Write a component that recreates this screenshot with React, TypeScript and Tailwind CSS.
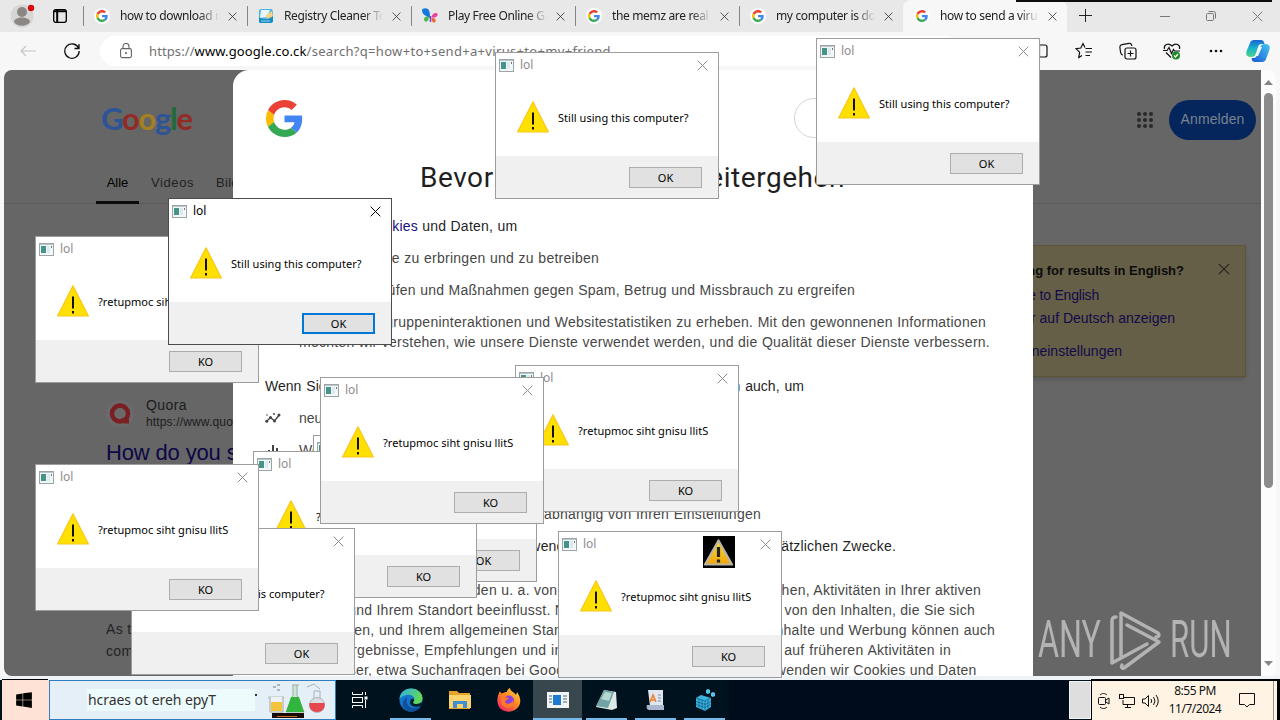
// desktop with a browser window, taskbar and a pile of message boxes

import type { ReactNode } from 'react';
import { IoLogoWindows } from 'react-icons/io5';

const Cross = ({ size = 11, className = '' }: { size?: number; className?: string }) => (
  <svg width={size} height={size} viewBox="0 0 11 11" className={className}>
    <path d="M.7.7l9.6 9.6M10.3.7L.7 10.3" stroke="currentColor" fill="none" />
  </svg>
);

const GoogleG = ({ size }: { size: number }) => (
  <svg width={size} height={size} viewBox="0 0 48 48">
    <path fill="#EA4335" d="M24 9.5c3.54 0 6.71 1.22 9.21 3.6l6.85-6.85C35.9 2.38 30.47 0 24 0 14.62 0 6.51 5.38 2.56 13.22l7.98 6.19C12.43 13.72 17.74 9.5 24 9.5z" />
    <path fill="#4285F4" d="M46.98 24.55c0-1.57-.15-3.09-.38-4.55H24v9.02h12.94c-.58 2.96-2.26 5.48-4.78 7.18l7.73 6c4.51-4.18 7.09-10.36 7.09-17.65z" />
    <path fill="#FBBC05" d="M10.53 28.59c-.48-1.45-.76-2.99-.76-4.59s.27-3.14.76-4.59l-7.98-6.19C.92 16.46 0 20.12 0 24c0 3.88.92 7.54 2.56 10.78l7.97-6.19z" />
    <path fill="#34A853" d="M24 48c6.48 0 11.93-2.13 15.89-5.81l-7.73-6c-2.15 1.45-4.92 2.3-8.16 2.3-6.26 0-11.57-4.22-13.47-9.91l-7.98 6.19C6.51 42.62 14.62 48 24 48z" />
  </svg>
);

/* ---------- message boxes ---------- */

const AppIcon = () => (
  <svg width="15" height="13" viewBox="0 0 15 13" className="block">
    <rect x=".5" y=".5" width="14" height="12" fill="#f4f7f7" stroke="#9aa5a8" />
    <path d="M1 1.5h13" stroke="#b8c7cc" />
    <rect x="2" y="3" width="5" height="7" fill="#46938a" />
    <rect x="8" y="3" width="3" height="7" fill="#dceaf0" />
    <path d="M12.5 3v2" stroke="#777" />
  </svg>
);

const Warning = () => (
  <svg width="32" height="32" viewBox="0 0 32 32" className="block">
    <path d="M16 .8L31.4 31H.6z" fill="#ffe000" stroke="#fac61b" strokeWidth="1.2" strokeLinejoin="round" />
    <path d="M16 11.5v12M16 26v2.4" stroke="#111" strokeWidth="2" />
  </svg>
);

type BoxProps = { pos: string; mirrored?: boolean; active?: boolean };

const MessageBox = ({ pos, mirrored, active }: BoxProps) => (
  <div
    className={`absolute flex h-[147px] w-[224px] flex-col border bg-white font-['Noto_Sans',sans-serif] ${pos} ${
      active ? 'border-[#4c4c4c]' : 'border-[#9d9d9d]'
    }`}
  >
    <div className="flex h-[24px] items-center pr-[10px] pl-[3px]">
      <AppIcon />
      <span className={`ml-[6px] text-[12px] leading-4 ${active ? 'text-black' : 'text-[#8d8d8d]'}`}>lol</span>
      <Cross className={`ml-auto ${active ? 'text-black' : 'text-[#8d8d8d]'}`} />
    </div>
    <div className="flex h-[79px] items-start pt-[24px] pl-[21px]">
      <Warning />
      <span className="mt-[9px] ml-[9px] text-[11px] leading-4 tracking-[0.03px] whitespace-nowrap text-black">
        {mirrored ? '?retupmoc siht gnisu llitS' : 'Still using this computer?'}
      </span>
    </div>
    <div className="flex flex-1 items-start justify-end bg-[#f0f0f0] pt-[11px] pr-4">
      <button
        className={`h-[21px] w-[73px] bg-[#e1e1e1] text-[11px] leading-none text-black ${
          active ? 'border-2 border-[#0078d7]' : 'border border-[#adadad]'
        }`}
      >
        {mirrored ? 'KO' : 'OK'}
      </button>
    </div>
  </div>
);

// back to front
const boxes: BoxProps[] = [
  { pos: 'left-[35px] top-[236px]', mirrored: true },
  { pos: 'left-[313px] top-[435px]' },
  { pos: 'left-[515px] top-[365px]', mirrored: true },
  { pos: 'left-[253px] top-[451px]', mirrored: true },
  { pos: 'left-[320px] top-[377px]', mirrored: true },
  { pos: 'left-[131px] top-[528px]' },
  { pos: 'left-[35px] top-[464px]', mirrored: true },
  { pos: 'left-[558px] top-[531px]', mirrored: true },
  { pos: 'left-[495px] top-[52px]' },
  { pos: 'left-[816px] top-[38px]' },
  { pos: 'left-[168px] top-[198px]', active: true },
];

/* ---------- browser chrome ---------- */

const GoogleDot = () => (
  <span className="flex size-4 items-center justify-center rounded-full bg-white">
    <GoogleG size={12} />
  </span>
);

const CleanerIcon = () => (
  <svg width="16" height="16" viewBox="0 0 16 16">
    <path d="M1 2l2-1h11l1 3v9l-2 2H2l-1-2z" fill="#4bb4e4" />
    <path d="M3 2h9l-3 7-7 1z" fill="#e8f6fb" />
    <path d="M8 7l6-4 1 6-6 3z" fill="#f3d489" />
    <path d="M1 9c4 3 9 3 14-1v6l-2 1H2l-1-1z" fill="#168dc5" />
    <path d="M3 13h9" stroke="#8dd4ee" />
  </svg>
);

const ButterflyIcon = () => (
  <svg width="16" height="16" viewBox="0 0 16 16">
    <path d="M8 10C6 9 0 7 0 2.500 0 0 4-.5 6 1c2 2 2 5 2 9z" fill="#1477dc" />
    <path d="M7 9c-3-1-5 0-5 2.500S6 16 7 9z" fill="#46b956" />
    <path d="M9.500 9.500c0-3 3-5 5-4.500 3 1.500 0 5.500-5 4.500z" fill="#e9459c" />
    <path d="M9.500 10c3-.5 5 1 4 3.500-2 3-4 0-4-3.500z" fill="#f2653b" />
    <path d="M8.500 8v6" stroke="#7346c8" strokeWidth="1.500" />
  </svg>
);

const tabs: { title: string; icon: ReactNode; active?: boolean }[] = [
  { title: 'how to download memz', icon: <GoogleDot /> },
  { title: 'Registry Cleaner Tool', icon: <CleanerIcon /> },
  { title: 'Play Free Online Games', icon: <ButterflyIcon /> },
  { title: 'the memz are real', icon: <GoogleDot /> },
  { title: 'my computer is doing', icon: <GoogleDot /> },
  { title: 'how to send a virus to', icon: <GoogleDot />, active: true },
];

const TabStrip = () => (
  <div className="flex h-8 items-center bg-[#e8e8e8] text-[#222]">
    <div className="flex w-[83px] items-center">
      <svg width="26" height="26" viewBox="0 0 26 26" className="ml-[10px]">
        <circle cx="12" cy="13" r="11.5" fill="#d8d6d4" />
        <circle cx="12" cy="9" r="5" fill="#8b8785" />
        <path d="M4 19c0-6 16-6 16 0-3 5-13 5-16 0z" fill="#8b8785" />
        <circle cx="21" cy="5" r="3.2" fill="#d40d0d" />
      </svg>
      <svg width="14" height="14" viewBox="0 0 14 14" className="ml-[17px]">
        <rect x=".7" y=".7" width="12.6" height="12.6" rx="2" fill="none" stroke="#000" strokeWidth="1.3" />
        <path d="M1 2.3h12M4.2 1v12" stroke="#000" strokeWidth="2" />
      </svg>
    </div>
    {tabs.map((tab) => (
      <div
        key={tab.title}
        className={`flex w-[164px] items-center ${
          tab.active ? 'h-8 rounded-t-lg bg-[#f7f7f7] pl-[11px]' : 'h-5 border-l border-[#858585] pl-[10px]'
        }`}
      >
        {tab.icon}
        <span className="ml-[10px] w-[99px] overflow-hidden mask-r-from-80% font-['Noto_Sans',sans-serif] text-[12px] leading-5 tracking-[-0.35px] whitespace-nowrap">
          {tab.title}
        </span>
        <Cross size={9} className="ml-[9px] text-[#333]" />
      </div>
    ))}
    <svg width="14" height="14" viewBox="0 0 14 14" className="ml-[12px]">
      <path d="M6.5 0v13M0 6.5h13" stroke="#222" />
    </svg>
    <div className="ml-auto flex items-center text-[#777]">
      <svg width="10" height="10" viewBox="0 0 10 10">
        <path d="M0 5.5h10" stroke="currentColor" />
      </svg>
      <svg width="10" height="10" viewBox="0 0 10 10" className="ml-[36px]">
        <rect x=".5" y="2.5" width="7" height="7" rx="1" fill="none" stroke="currentColor" />
        <path d="M2.5.5h5a2 2 0 012 2v5" fill="none" stroke="currentColor" />
      </svg>
      <Cross size={11} className="mr-[17px] ml-[36px]" />
    </div>
  </div>
);

const Toolbar = () => (
  <div className="flex h-[38px] items-center bg-[#f7f7f7]">
    <svg width="16" height="12" viewBox="0 0 16 12" className="ml-[20px]">
      <path d="M16 6H1M6 1L1 6l5 5" fill="none" stroke="#c3c3c3" strokeWidth="1.1" />
    </svg>
    <svg width="16" height="16" viewBox="0 0 16 16" className="ml-[28px]">
      <path d="M14.6 5.2A7.2 7.2 0 1015.2 8M15 1v4.5h-4.5" fill="none" stroke="#111" strokeWidth="1.3" />
    </svg>
    <div className="ml-[20px] flex h-[30px] w-[860px] items-center rounded-full bg-white pl-[20px]">
      <svg width="12" height="16" viewBox="0 0 12 16">
        <rect x=".6" y="5.6" width="10.8" height="9" rx="1.5" fill="none" stroke="#666" strokeWidth="1.1" />
        <path d="M3 5.5v-2a3 3 0 016 0v2" fill="none" stroke="#666" strokeWidth="1.1" />
        <circle cx="6" cy="10" r="1" fill="#555" />
      </svg>
      <span className="ml-[17px] pt-px font-['Noto_Sans',sans-serif] text-[13px] whitespace-nowrap text-[#707070]">
        <span className="tracking-[0.1px]">
          https://<span className="text-black">www.google.co.ck</span>
        </span>
        <span className="tracking-[0.32px]">/search?q=how+to+send+a+virus+to+my+friend</span>
      </span>
    </div>
    <div className="ml-auto flex items-center gap-[26px] pr-[10px] text-[#111]">
      <svg width="18" height="18" viewBox="0 0 18 18" fill="none" stroke="currentColor" strokeWidth="1.2">
        <rect x="1" y="3" width="15" height="12" rx="2" />
        <path d="M8.5 3v12" />
      </svg>
      <svg width="18" height="18" viewBox="0 0 18 18" fill="none" stroke="currentColor" strokeWidth="1.2">
        <path d="M10 5.5l-2-4L5.8 6 1 6.7l3.6 3.4-.8 5.4L7 13.5M10.5 6.5H17M10.5 10H17M10.5 13.5H15" />
      </svg>
      <svg width="18" height="18" viewBox="0 0 18 18" fill="none" stroke="currentColor" strokeWidth="1.2">
        <rect x="6" y="6" width="11" height="11" rx="2" />
        <path d="M11.5 8.5v6M8.5 11.5h6M4 13c-2 0-2-1-2.5-3L.9 5.5C.7 4 1.5 3 3 2.700L10 1.300c1.500-.3 2.500.5 2.800 2.500" />
      </svg>
      <svg width="18" height="18" viewBox="0 0 18 18" fill="none" stroke="currentColor" strokeWidth="1.2">
        <path d="M1.500 7C.5 3 5 0 9 4c4-4 8.500-1 7.500 3M3 10.500l5 5M0 8.500h4l2-3 2.500 6 2-4 1 1.500H17" />
        <circle cx="13" cy="13.5" r="4" fill="#1b8a27" stroke="none" />
        <path d="M11 13.5l1.5 1.5 2.500-3" stroke="#fff" />
      </svg>
      <svg width="18" height="18" viewBox="0 0 18 18" fill="currentColor">
        <circle cx="4" cy="9" r="1.3" />
        <circle cx="9" cy="9" r="1.3" />
        <circle cx="14" cy="9" r="1.3" />
      </svg>
      <svg width="24" height="24" viewBox="0 0 24 24" className="-ml-[5px]">
        <defs>
          <linearGradient id="cpA" x1="0" y1="0" x2="0" y2="1">
            <stop offset="0" stopColor="#1b64d8" />
            <stop offset=".5" stopColor="#18b4c8" />
            <stop offset="1" stopColor="#4fd38b" />
          </linearGradient>
          <linearGradient id="cpB" x1="1" y1="0" x2="0" y2="1">
            <stop offset="0" stopColor="#45c7ef" />
            <stop offset="1" stopColor="#1a56d6" />
          </linearGradient>
        </defs>
        <path d="M4 4c1-3 3-3 5-3h6c2 0 3 1 3.500 4h-3c-2 0-3 1-3.500 3l-2 6c-1 3-2 4-5 4-5 0-5.500-3-4-7z" fill="url(#cpA)" />
        <path d="M20 20c-1 3-3 3-5 3H9c-2 0-3-1-3.500-4h2c2 0 3-1 3.500-3l3-7c1-3 2-4 5-4 5 0 5.500 3 4 7z" fill="url(#cpB)" />
        <path d="M13.500 8h2.500l-4 9H9.500z" fill="#f2fbff" />
      </svg>
    </div>
  </div>
);

/* ---------- search page behind the consent sheet ---------- */

const SearchPage = () => (
  <div className="h-full rounded-l-lg bg-[#666] text-[#222]">
    <div className="flex h-[100px] items-center pl-[97px]">
      <div className="-mt-[3px] font-[Lato,sans-serif] text-[31px] leading-none font-bold tracking-[-1.3px]">
        <span className="text-[#2d5496]">G</span>
        <span className="text-[#922b25]">o</span>
        <span className="text-[#a5811d]">o</span>
        <span className="text-[#2d5496]">g</span>
        <span className="text-[#24693a]">l</span>
        <span className="text-[#922b25]">e</span>
      </div>
      <svg width="16" height="16" viewBox="0 0 16 16" fill="#292929" className="ml-auto">
        {[2, 8, 14].map((y) => [2, 8, 14].map((x) => <circle key={`${x}-${y}`} cx={x} cy={y} r="2" />))}
      </svg>
      <span className="mr-[5px] ml-[16px] flex h-10 w-[87px] items-center justify-center rounded-full bg-[#04265c] pb-[2px] text-[14px] tracking-[0.1px] text-[#7b8290]">
        Anmelden
      </span>
    </div>
    <div className="flex h-[34px] items-start border-b border-[#5b5b5b] pl-[92px] text-[13px]">
      <span className="h-[34px] w-[43px] border-b-[3px] border-[#0c0c0c] pt-[3px] text-center text-black">Alle</span>
      <span className="ml-[12px] w-[43px] pt-[3px] tracking-[0.6px]">Videos</span>
      <span className="ml-[22px] pt-[3px] tracking-[0.3px]">Bilder</span>
    </div>
    <div className="flex justify-between">
      <div className="w-[600px] pt-[192px] pl-[102px]">
        <div className="flex items-center">
          <span className="flex size-[28px] items-center justify-center rounded-full bg-[#6b6969]">
            <svg width="22" height="22" viewBox="0 0 22 22">
              <circle cx="11" cy="10.5" r="8" fill="none" stroke="#7b2022" strokeWidth="4.5" />
              <path d="M12 15l8 1v4.5h-5z" fill="#7b2022" />
            </svg>
          </span>
          <div className="ml-[12px] pt-px text-[12px] leading-[17px] text-[#1c1c1c]">
            <div className="text-[14px] tracking-[0.4px]">Quora</div>
            <div className="tracking-[0.15px]">https://www.quora.com</div>
          </div>
        </div>
        <div className="mt-[9px] text-[22px] leading-[26px] tracking-[-0.15px] text-[#0d0747]">
          How do you send a virus?
        </div>
        <div className="mt-[152px] text-[14px] leading-[22px] tracking-[0.3px]">
          As the name suggests
          <br />
          computer virus
        </div>
      </div>
      <div className="mt-[41px] mr-[15px] flex h-[132px] w-[280px] flex-col border border-[#5d5538] bg-[#665f48] text-[14px] leading-[22px] text-[#110a4a] shadow-md">
        <div className="flex h-[38px] items-end">
          <span className="mb-[2px] w-[217px] text-right text-[13px] font-bold whitespace-nowrap text-[#0b0b0b]">
            Looking for results in English?
          </span>
          <Cross size={12} className="mb-[9px] ml-[34px] text-[#25231c]" />
        </div>
        <span className="w-[132px] text-right tracking-[-0.2px] whitespace-nowrap">Change to English</span>
        <span className="mt-px w-[208px] text-right whitespace-nowrap">Immer auf Deutsch anzeigen</span>
        <span className="mt-[11px] w-[155px] text-right whitespace-nowrap">Spracheneinstellungen</span>
      </div>
    </div>
  </div>
);

/* ---------- consent sheet ---------- */

const Line = ({ w, children }: { w: string; children: ReactNode }) => (
  <div className={`whitespace-nowrap [text-align-last:justify] ${w}`}>{children}</div>
);

const Item = ({ icon, children }: { icon?: ReactNode; children: ReactNode }) => (
  <div className="mt-[12px] flex">
    <span className="w-[34px] shrink-0">{icon}</span>
    <div>{children}</div>
  </div>
);

const ConsentSheet = () => (
  <div className="absolute top-[70px] left-[233px] h-[606px] w-[800px] overflow-hidden rounded-tl-[16px] bg-white px-8 text-[14px] leading-5 text-[#474747]">
    <div className="flex h-[96px] items-center justify-between pl-px">
      <GoogleG size={37} />
      <span className="h-10 w-[207px] rounded-full border border-[#d2d4d8]" />
    </div>
    <div className="ml-[155px] w-[425px] font-[Roboto,sans-serif] text-[28px] leading-6 tracking-[0.55px] whitespace-nowrap text-[#1f1f1f] [text-align-last:justify]">
      Bevor Sie zu Google weitergehen
    </div>
    <div className="mt-[26px] text-[#1f1f1f]">
      <Line w="w-[249px] tracking-[0.25px]">
        Wir verwenden <span className="text-[#1a0d85]">Cookies</span> und Daten, um
      </Line>
    </div>
    <Item>
      <Line w="w-[300px] tracking-[0.25px]">Google-Dienste zu erbringen und zu betreiben</Line>
    </Item>
    <Item>
      <Line w="w-[556px] tracking-[0.25px]">
        Ausfälle zu prüfen und Maßnahmen gegen Spam, Betrug und Missbrauch zu ergreifen
      </Line>
    </Item>
    <Item>
      <Line w="w-[687px] tracking-[0.25px]">
        Daten zu Zielgruppeninteraktionen und Websitestatistiken zu erheben. Mit den gewonnenen Informationen
      </Line>
      <Line w="w-[691px] tracking-[0.25px]">
        möchten wir verstehen, wie unsere Dienste verwendet werden, und die Qualität dieser Dienste verbessern.
      </Line>
    </Item>
    <div className="mt-[24px] text-[#1f1f1f]">
      <Line w="w-[539px]">Wenn Sie „Alle akzeptieren“ auswählen, verwenden wir Cookies und Daten auch, um</Line>
    </div>
    <Item
      icon={
        <svg width="16" height="20" viewBox="0 0 16 20" className="text-[#444]">
          <path d="M1.5 13.5l4-4 4 3.5 5-6.5" fill="none" stroke="currentColor" strokeWidth="1.3" />
          <g fill="currentColor">
            <circle cx="1.7" cy="13.3" r="1.5" />
            <circle cx="5.5" cy="9.5" r="1.5" />
            <circle cx="9.5" cy="13" r="1.5" />
            <circle cx="14" cy="7" r="1.5" />
            <circle cx="9" cy="6" r="1" />
            <circle cx="2" cy="7" r=".8" />
          </g>
        </svg>
      }
    >
      neue Dienste zu entwickeln
    </Item>
    <Item
      icon={
        <svg width="16" height="20" viewBox="0 0 16 20">
          <path d="M4 10v6M8 5v11M12 8v8" stroke="#444" strokeWidth="2" />
        </svg>
      }
    >
      Werbung auszuliefern
    </Item>
    <Item>personalisierte Inhalte anzuzeigen</Item>
    <Item>
      <Line w="w-[462px] tracking-[0.25px]">
        personalisierte Werbung anzuzeigen, abhängig von Ihren Einstellungen
      </Line>
    </Item>
    <div className="mt-[12px] text-[#1f1f1f]">
      <Line w="w-[631px] tracking-[0.18px]">
        Wenn Sie „Alle ablehnen“ auswählen, verwenden wir Cookies nicht für diese zusätzlichen Zwecke.
      </Line>
    </div>
    <div className="mt-[24px] tracking-[0.25px]">
      <Line w="w-[716px]">
        Nicht personalisierte Inhalte werden u. a. von Inhalten, die Sie sich gerade ansehen, Aktivitäten in Ihrer aktiven
      </Line>
      <Line w="w-[710px]">
        Suchsitzung und Ihrem Standort beeinflusst. Nicht personalisierte Werbung wird von den Inhalten, die Sie sich
      </Line>
      <Line w="w-[730px]">
        gerade ansehen, und Ihrem allgemeinen Standort beeinflusst. Personalisierte Inhalte und Werbung können auch
      </Line>
      <Line w="w-[686px]">
        relevantere Ergebnisse, Empfehlungen und individuelle Werbung enthalten, die auf früheren Aktivitäten in
      </Line>
      <Line w="w-[711px]">
        diesem Browser, etwa Suchanfragen bei Google, basieren. Soweit relevant, verwenden wir Cookies und Daten
      </Line>
    </div>
  </div>
);

const ScrollBar = () => (
  <div className="flex w-[15px] flex-col items-center rounded-r-lg bg-[#fcfcfc] pt-[9px] pb-[9px]">
    <svg width="9" height="6" viewBox="0 0 9 6">
      <path d="M0 6l4.5-5L9 6z" fill="#858585" />
    </svg>
    <span className="mt-[8px] h-[395px] w-[9px] rounded-full bg-[#8b8b8b]" />
    <svg width="9" height="6" viewBox="0 0 9 6" className="mt-auto">
      <path d="M0 0l4.5 5L9 0z" fill="#858585" />
    </svg>
  </div>
);

/* ---------- watermark ---------- */

const Watermark = () => (
  <div className="absolute top-[608px] left-[1038px] flex h-[64px] w-[200px] items-center font-[Roboto,sans-serif] text-[52px] leading-none text-[#b3b3b3]">
    <span className="w-[65px]">
      <span className="inline-block origin-left scale-x-[0.62]">ANY</span>
    </span>
    <svg
      width="56"
      height="64"
      viewBox="0 0 56 64"
      fill="none"
      stroke="currentColor"
      strokeWidth="3.5"
      strokeLinejoin="round"
      strokeLinecap="round"
      className="ml-[5px] shrink-0"
    >
      <path d="M8 9C4 9 4 11 4 13v42l35-19M13 48V5l37 20c2 2 1 4-2 4M19 17l32 17L16 60c-2 1-3-1-2-3" />
    </svg>
    <span className="ml-[6px] inline-block origin-left scale-x-[0.6]">RUN</span>
  </div>
);

/* ---------- taskbar ---------- */

const EdgeIcon = () => (
  <svg width="24" height="24" viewBox="0 0 24 24">
    <defs>
      <linearGradient id="edA" x1="0" y1="0" x2="1" y2=".4">
        <stop offset="0" stopColor="#2baee8" />
        <stop offset="1" stopColor="#63d957" />
      </linearGradient>
    </defs>
    <circle cx="12" cy="12" r="11.5" fill="#1476c8" />
    <path d="M.5 11C1 4 6 .5 12 .5c7 0 11.5 5 11.5 9.5 0 4-3 6-6 6-3.5 0-4-1.5-3-2.5 3-4-2-8-7-6.5C4 8 1.5 9 .5 11z" fill="url(#edA)" />
    <path d="M9 9c-3 3-1 11 6 11 3 0 5-1 7-2-4 6-11 7-15 4C2 18 3 11 9 9z" fill="#104f9b" />
    <path d="M14.5 13.5c-1 1-.5 2.5 3 2.5 2 0 4-.7 5-2 .5 1 1 3-.5 4-3 1-11 2-11-4 0-2 2-4 3.500-3 1 .6.7 1.500 0 2.500z" fill="#06202f" />
  </svg>
);

const FolderIcon = () => (
  <svg width="24" height="22" viewBox="0 0 24 22">
    <path d="M1 2h8l2 2h11v16H1z" fill="#e5a32c" />
    <path d="M1 6h22v13H1z" fill="#fbd36c" />
    <path d="M5 19v-7h14v7h-4v-4H9v4z" fill="#3e8fd3" />
  </svg>
);

const FirefoxIcon = () => (
  <svg width="24" height="24" viewBox="0 0 24 24">
    <defs>
      <linearGradient id="ffA" x1="1" y1="0" x2=".2" y2="1">
        <stop offset="0" stopColor="#ffe14a" />
        <stop offset=".5" stopColor="#ff8a1f" />
        <stop offset="1" stopColor="#f0246a" />
      </linearGradient>
    </defs>
    <path d="M3 3c0 1 1 2 2 2.5C7 4 9 4 10 4c0-2 1-3 3-4 0 3 4 4 6 7l1-3c4 6 4 10 2 14-5 8-17 7-20.500 0C-1 12 1 7 3 3z" fill="url(#ffA)" />
    <circle cx="12" cy="12.5" r="5" fill="#8a3fe0" />
    <path d="M5 9c3-1 5 1 7 1-1 2-4 2-4 4 2 3 7 2 8-2 1 5-2 8-6 8-5-1-7-6-5-11z" fill="#ff7a22" />
  </svg>
);

const WindowIcon = () => (
  <svg width="22" height="16" viewBox="0 0 22 16">
    <rect width="22" height="16" fill="#f2f4f5" />
    <rect x="6" y="3" width="8" height="10" fill="#1f7bd0" />
    <path d="M2 4h3M2 7h3M2 10h3M16 4h4M16 7h4M16 10h4" stroke="#56656d" />
  </svg>
);

const NotepadIcon = () => (
  <svg width="22" height="24" viewBox="0 0 22 24">
    <path d="M8 2l12 2 1 16-5 2L0 19z" fill="#dfe9e7" />
    <path d="M8 2l10 2-6 16L0 18z" fill="#6fa3a4" />
    <path d="M9 4l7 1-3 8-8-2z" fill="#b5d6d3" />
  </svg>
);

const ScriptIcon = () => (
  <svg width="20" height="22" viewBox="0 0 20 22">
    <path d="M2 1h15v16H4z" fill="#dfe6ef" />
    <path d="M1 16h17v5H3c-2 0-3-3-2-5z" fill="#a9b8cf" />
    <path d="M4 13l3-7 3 7M5 11h4" stroke="#f08030" strokeWidth="1.6" fill="none" />
    <path d="M12 6h3M12 9h3M12 12h3" stroke="#7d8ca0" />
  </svg>
);

const RegistryIcon = () => (
  <svg width="22" height="24" viewBox="0 0 22 24">
    <path d="M2 10l5-3 10 3v9l-6 4-9-4z" fill="#3cb2de" />
    <path d="M2 10l9 3 6-3M11 13v10M5 11v10M8 12v10M14 12v9M2 13.5l9 3 6-3M2 16.500l9 3 6-3" stroke="#0a5c84" strokeWidth=".7" fill="none" />
    <path d="M12 2l2-1 2 1v3l-2 1-2-1zM17 5l2-1 2 1v3l-2 1-2-1z" fill="#58c6ec" />
  </svg>
);

const apps: { icon: ReactNode; line?: boolean; active?: boolean }[] = [
  { icon: <EdgeIcon />, line: true },
  { icon: <FolderIcon /> },
  { icon: <FirefoxIcon /> },
  { icon: <WindowIcon />, line: true, active: true },
  { icon: <NotepadIcon />, line: true },
  { icon: <ScriptIcon />, line: true },
  { icon: <RegistryIcon />, line: true },
];

const Flasks = () => (
  <svg width="62" height="36" viewBox="0 0 62 36">
    <path d="M3 14h16v3H3z" fill="#cfd6da" />
    <path d="M5 15v15h13V15" fill="#eef2f4" stroke="#9aa9b4" />
    <path d="M6 20h11v9H6z" fill="#f4c53a" />
    <path d="M8 5h3M12 3h3M12 8h3" stroke="#98a3aa" strokeWidth="1.5" />
    <path d="M27 3h7M28 3v10l-7 17h18l-7-17V3" fill="#cfe5d6" stroke="#98b0a3" />
    <path d="M26 15h8l5 15H21z" fill="#31b53c" />
    <path d="M49 9h6v8h-6zM42 5l7-3 6 5" stroke="#a5b0b8" fill="none" />
    <circle cx="52" cy="23" r="7.5" fill="#d9dde0" stroke="#b0b5ba" />
    <path d="M44.5 21h15c1 5-2 9-7.5 9s-8.5-4-7.5-9z" fill="#e4484e" />
    <path d="M7 31h32v5H7z" fill="#180b05" />
    <path d="M12 34.5h20" stroke="#c86a20" />
  </svg>
);

const Taskbar = () => (
  <div className="flex h-10 bg-[#00121d] font-['Noto_Sans',sans-serif]">
    <div className="ml-[2px] flex w-[47px] items-center justify-center bg-[#ffe2d6] pr-[3px]">
      <IoLogoWindows size={18} color="#000" />
    </div>
    <div className="flex w-[287px] items-center border border-[#2f7fc2] bg-[#e4eff8] pl-[37px]">
      <span className="h-[22px] w-[168px] bg-[#eefbfd] pl-[1px] text-[14px] leading-[22px] tracking-[-0.05px] whitespace-nowrap text-[#333]">
        hcraes ot ereh epyT
      </span>
      <span className="mb-[10px] size-[2px] bg-[#333]" />
      <div className="ml-[8px]">
        <Flasks />
      </div>
    </div>
    <div className="flex w-[50px] items-center justify-center pr-[3px]">
      <svg width="17" height="16" viewBox="0 0 17 16" fill="none" stroke="#fff">
        <path d="M1.5 0v2.5h10V0M1.5 16v-2.5h10V16M14.5 0v3M14.5 8v8" />
        <rect x="1.5" y="5.5" width="10" height="5" />
        <rect x="14" y="5" width="2" height="2" fill="#fff" />
      </svg>
    </div>
    {apps.map((app, i) => (
      <div key={i} className={`relative flex w-[49px] items-center justify-center ${app.active ? 'bg-[#38474e]' : ''}`}>
        {app.icon}
        {app.line && (
          <span className={`absolute bottom-0 h-[2px] bg-[#76b9ed] ${app.active ? 'inset-x-0' : 'inset-x-[4px]'}`} />
        )}
      </div>
    ))}
    <div className="flex-1 bg-[#000b1c]" />
    <div className="my-px w-[22px] border border-[#f2f2f2] bg-[#dedede]" />
    <div className="flex w-[186px] items-center border-t border-l border-black bg-[#fff3e4] pl-[6px] text-[#111]">
      <svg width="12" height="16" viewBox="0 0 12 16" fill="none" stroke="currentColor">
        <rect x=".5" y="4.5" width="7" height="7" rx="1" />
        <path d="M8 7l3-2v6L8 9M2 2c2-2 5-2 7 0M2 14c2 2 5 2 7 0" />
      </svg>
      <svg width="16" height="14" viewBox="0 0 16 14" fill="none" stroke="currentColor" className="ml-[9px]">
        <path d="M5 3.5h10.5v7H4V6M8.5 11v2.5M6 13.5h6" />
        <rect x=".5" y=".5" width="4" height="4" />
      </svg>
      <svg width="17" height="14" viewBox="0 0 17 14" fill="none" stroke="currentColor" className="ml-[7px]">
        <path d="M.5 5v4H3l3.5 3.5v-11L3 5zM9 5q1.5 2 0 4M11.5 3q3 4 0 8M14 1q4.5 6 0 12" />
      </svg>
      <div className="ml-[8px] w-[56px] pb-px text-center text-[12px] leading-[18px] tracking-[-0.5px] whitespace-nowrap">
        <div>8:55 PM</div>
        <div>11/7/2024</div>
      </div>
      <svg width="17" height="16" viewBox="0 0 17 16" fill="none" stroke="currentColor" className="ml-[16px]">
        <path d="M.5.5h15v11h-5L8 14l-2.5-2.5h-5z" />
      </svg>
      <span className="mr-[3px] ml-auto h-full w-px bg-[#9c958c]" />
    </div>
    <div className="w-[3px] bg-black" />
  </div>
);

export default function App() {
  return (
    <div className="relative flex h-[720px] w-[1280px] flex-col overflow-hidden bg-[#f7f7f7] font-['Liberation_Sans',sans-serif]">
      <TabStrip />
      <Toolbar />
      <div className="flex h-[606px] pl-1">
        <div className="w-[1257px]">
          <SearchPage />
        </div>
        <ScrollBar />
      </div>
      <div className="flex h-[4px] items-end bg-[#eef3f8]">
        <span className="ml-[2px] h-px w-[46px] bg-black" />
        <span className="ml-auto h-px w-[189px] bg-black" />
      </div>
      <Taskbar />

      <ConsentSheet />
      <Watermark />
      {boxes.map((box) => (
        <MessageBox key={box.pos} {...box} />
      ))}

      {/* stray cursor icon */}
      <div className="absolute top-[536px] left-[703px] size-8 bg-black">
        <svg width="32" height="32" viewBox="0 0 32 32">
          <defs>
            <linearGradient id="wn" x1="0" y1="0" x2="0" y2="1">
              <stop offset="0" stopColor="#f7d93c" />
              <stop offset="1" stopColor="#f0a50c" />
            </linearGradient>
          </defs>
          <path d="M15.5 4.5L29 28.5H2z" fill="url(#wn)" stroke="#b9b6a4" strokeWidth="2.2" strokeLinejoin="round" />
          <path d="M15.5 11v10M15.5 23.5v3" stroke="#222" strokeWidth="3.2" />
        </svg>
      </div>
      <div className="absolute top-0 left-[1016px] h-[2px] w-[256px] bg-[#0c0c0c]" />
    </div>
  );
}
